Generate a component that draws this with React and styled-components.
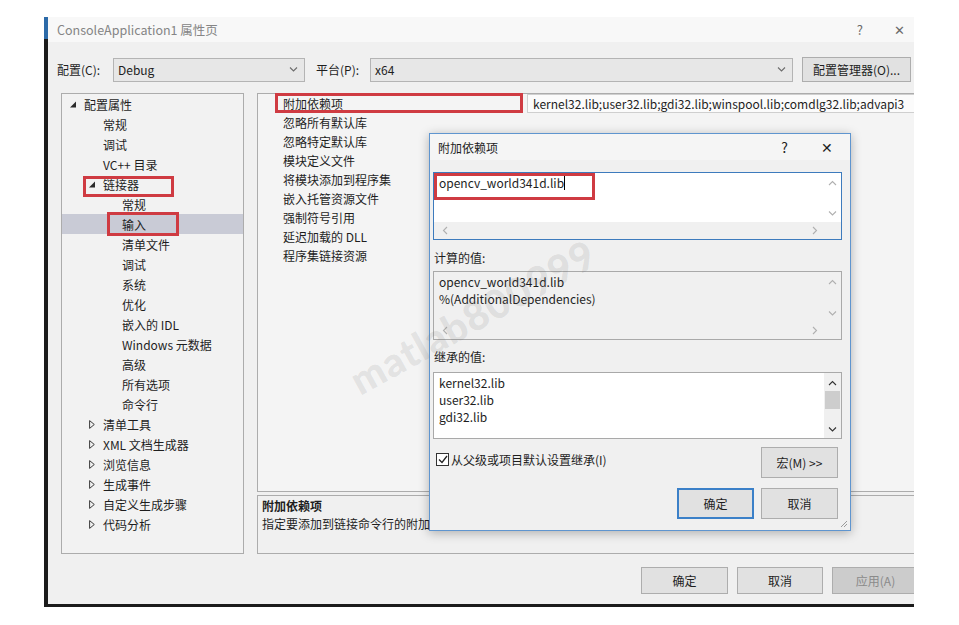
import React from 'react';
import styled, { createGlobalStyle } from 'styled-components';

const GlobalStyle = createGlobalStyle`
  html, body {
    margin: 0;
    padding: 0;
    background: #ffffff;
  }
  body {
    font-family: "Noto Sans CJK SC", "Noto Sans", sans-serif;
    font-size: 12px;
    color: #1e1e1e;
  }
`;

const RED = '#cf3b42';

const Page = styled.div`
  width: 959px;
  height: 625px;
  padding: 17px 0 0 44px;
  box-sizing: border-box;
`;

const Frame = styled.div`
  width: 870px;
  padding: 0 0 3px 4px;
  box-sizing: border-box;
  background: linear-gradient(#2c6aa8 0, #2c6aa8 22px, #1b1b1b 22px);
`;

const Window = styled.div`
  position: relative;
  width: 866px;
  height: 587px;
  background: #f0f0f0;
  overflow: hidden;
  display: flex;
  flex-direction: column;
`;

const TitleBar = styled.div`
  height: 25px;
  flex-shrink: 0;
  display: flex;
  align-items: center;
  padding: 0 0 0 9px;
  background: #f8f8f8;
  color: #858585;
  font-size: 12.5px;
`;

const TitleText = styled.span`
  flex: 1;
`;

const TitleControls = styled.div`
  display: flex;
  align-items: center;
  gap: ${p => p.$gap || 31}px;
  padding-right: ${p => p.$pr || 9}px;
  color: ${p => p.$color || '#6a6a6a'};
  font-size: ${p => p.$size || 13}px;
`;

const Body = styled.div`
  flex: 1;
  display: flex;
  flex-direction: column;
  padding: 15px 0 0 9px;
`;

const ConfigRow = styled.div`
  display: flex;
  align-items: center;
  height: 25px;
`;

const FieldLabel = styled.span`
  width: ${p => p.$w}px;
  margin-left: ${p => p.$ml || 0}px;
  flex-shrink: 0;
`;

const Combo = styled.div`
  width: ${p => p.$w}px;
  height: 24px;
  box-sizing: border-box;
  border: 1px solid #b4b4b4;
  background: #e7e7e7;
  display: flex;
  align-items: center;
  justify-content: space-between;
  padding: 0 6px 0 4px;
`;

const Button = styled.div`
  width: ${p => p.$w}px;
  height: ${p => p.$h || 27}px;
  box-sizing: border-box;
  border: ${p => (p.$default ? '2px solid #3b80c8' : '1px solid #adadad')};
  background: ${p => (p.$disabled ? '#cccccc' : '#e1e1e1')};
  color: ${p => (p.$disabled ? '#8a8a8a' : '#1e1e1e')};
  display: flex;
  align-items: center;
  justify-content: center;
  margin-left: ${p => p.$ml || 0}px;
  flex-shrink: 0;
`;

const Main = styled.div`
  display: flex;
  gap: 13px;
  margin-top: 11px;
  padding-left: 4px;
`;

const TreePanel = styled.div`
  width: 183px;
  height: 461px;
  box-sizing: border-box;
  border: 1px solid #acacac;
  background: #f2f2f2;
  flex-shrink: 0;
`;

const TreeRow = styled.div`
  position: relative;
  height: 20px;
  display: flex;
  align-items: center;
  padding-left: ${p => 8 + p.$level * 19}px;
  background: ${p => (p.$selected ? '#c9cbd6' : 'transparent')};
  white-space: nowrap;
`;

const ArrowSlot = styled.span`
  width: 14px;
  display: flex;
  align-items: center;
  flex-shrink: 0;
`;

const RedBox = styled.div`
  position: absolute;
  left: ${p => p.$l}px;
  top: ${p => p.$t}px;
  width: ${p => p.$w}px;
  height: ${p => p.$h}px;
  border: 3px solid ${RED};
  box-sizing: border-box;
  pointer-events: none;
`;

const RightCol = styled.div`
  width: 720px;
  display: flex;
  flex-direction: column;
  gap: 3px;
  flex-shrink: 0;
`;

const PropGrid = styled.div`
  height: 399px;
  box-sizing: border-box;
  border: 1px solid #acacac;
  background: #f4f4f4;
`;

const PropRow = styled.div`
  position: relative;
  height: 19px;
  display: grid;
  grid-template-columns: 17px 252px 1fr;
  align-items: stretch;
`;

const PropName = styled.div`
  grid-column: 2;
  display: flex;
  align-items: center;
  padding-left: 8px;
`;

const PropValue = styled.div`
  display: flex;
  align-items: center;
  padding-left: 5px;
  white-space: nowrap;
  overflow: hidden;
  ${p => p.$boxed && 'background: #fbfbfb; border: 1px solid #cfcfcf; border-right: none;'}
`;

const Description = styled.div`
  height: 59px;
  box-sizing: border-box;
  border: 1px solid #acacac;
  padding: 1px 4px;
  line-height: 18px;
`;

const DescTitle = styled.div`
  font-weight: bold;
`;

const Footer = styled.div`
  display: flex;
  gap: 9px;
  margin-top: 13px;
  padding-left: 584px;
`;

const Watermark = styled.div`
  position: absolute;
  left: 305px;
  top: 342px;
  transform: rotate(-29deg);
  transform-origin: 0 50%;
  font-family: "Lato", "Noto Sans", sans-serif;
  font-weight: 900;
  font-size: 40px;
  letter-spacing: 1px;
  color: rgba(110, 110, 110, 0.15);
  pointer-events: none;
  z-index: 3;
`;

const Modal = styled.div`
  position: absolute;
  left: 381px;
  top: 116px;
  width: 422px;
  height: 398px;
  box-sizing: border-box;
  border: 1px solid #5f95cf;
  background: #f0f0f0;
  box-shadow: 0 2px 10px rgba(0, 0, 0, 0.28);
  display: flex;
  flex-direction: column;
  z-index: 2;
`;

const ModalTitle = styled.div`
  height: 26px;
  display: flex;
  align-items: center;
  padding-left: 8px;
  background: #f5f5f5;
`;

const ModalBody = styled.div`
  position: relative;
  padding: 12px 8px 0 3px;
  display: flex;
  flex-direction: column;
`;

const TextBox = styled.div`
  position: relative;
  height: ${p => p.$h}px;
  box-sizing: border-box;
  border: 1px solid ${p => (p.$focus ? '#3d7bbd' : '#a9a9a9')};
  background: ${p => (p.$disabled ? '#f0f0f0' : '#ffffff')};
  display: grid;
  grid-template-columns: 1fr 17px;
  grid-template-rows: ${p => (p.$hscroll ? '1fr 17px' : '1fr')};
`;

const TextArea = styled.div`
  padding: 1px 5px;
  line-height: 17px;
  white-space: pre;
`;

const VScroll = styled.div`
  display: flex;
  flex-direction: column;
  align-items: center;
  justify-content: space-between;
  padding: 6px 0 4px;
  background: ${p => (p.$solid ? '#f0f0f0' : 'transparent')};
`;

const Thumb = styled.div`
  width: 15px;
  height: 18px;
  margin-top: 3px;
  background: #cdcdcd;
`;

const Spacer = styled.span`
  flex: 1;
`;

const HScroll = styled.div`
  grid-column: 1 / span 2;
  background: #f0f0f0;
  display: flex;
  align-items: center;
  justify-content: space-between;
  padding: 0 22px 0 7px;
`;

const Caret = styled.span`
  display: inline-block;
  width: 1px;
  height: 14px;
  background: #000;
  vertical-align: -2px;
`;

const SectionLabel = styled.div`
  height: 18px;
  line-height: 18px;
  margin: ${p => p.$mt}px 0 ${p => p.$mb}px 1px;
`;

const OptionRow = styled.div`
  display: flex;
  justify-content: space-between;
  align-items: flex-start;
  margin-top: 8px;
  padding: 0 4px 0 3px;
`;

const CheckLabel = styled.label`
  display: flex;
  align-items: center;
  gap: 2px;
  margin-top: 4px;
`;

const CheckBox = styled.span`
  width: 13px;
  height: 13px;
  box-sizing: border-box;
  border: 1px solid #333;
  background: #fff;
  display: flex;
  align-items: center;
  justify-content: center;
`;

const ModalButtons = styled.div`
  display: flex;
  justify-content: flex-end;
  gap: 7px;
  margin-top: 10px;
  padding-right: 4px;
`;

const Grip = styled.svg`
  position: absolute;
  right: 2px;
  bottom: 2px;
`;

const Chevron = ({ dir = 'down', color = '#6d6d6d', size = 9 }) => {
  const d = {
    down: 'M1 2.5l3.5 3.5 3.5-3.5',
    up: 'M1 6l3.5-3.5L8 6',
    left: 'M6 1L2.5 4.5 6 8',
    right: 'M3 1l3.5 3.5L3 8',
  }[dir];
  return (
    <svg width={size} height={size} viewBox="0 0 9 9">
      <path d={d} fill="none" stroke={color} strokeWidth="1.1" />
    </svg>
  );
};

const TreeArrow = ({ open }) =>
  open ? (
    <svg width="7" height="7" viewBox="0 0 7 7">
      <polygon points="6,0.5 6,6.5 0,6.5" fill="#2a2a2a" />
    </svg>
  ) : (
    <svg width="6" height="9" viewBox="0 0 6 9">
      <polygon points="0.6,0.6 5.3,4.5 0.6,8.4" fill="none" stroke="#3a3a3a" strokeWidth="1" />
    </svg>
  );

const tree = [
  { level: 0, arrow: 'open', text: '配置属性' },
  { level: 1, text: '常规' },
  { level: 1, text: '调试' },
  { level: 1, text: 'VC++ 目录' },
  { level: 1, arrow: 'open', text: '链接器', mark: { l: -6, t: 2, w: 91, h: 21 } },
  { level: 2, text: '常规' },
  { level: 2, text: '输入', selected: true, mark: { l: -15, t: -2, w: 72, h: 24 } },
  { level: 2, text: '清单文件' },
  { level: 2, text: '调试' },
  { level: 2, text: '系统' },
  { level: 2, text: '优化' },
  { level: 2, text: '嵌入的 IDL' },
  { level: 2, text: 'Windows 元数据' },
  { level: 2, text: '高级' },
  { level: 2, text: '所有选项' },
  { level: 2, text: '命令行' },
  { level: 1, arrow: 'closed', text: '清单工具' },
  { level: 1, arrow: 'closed', text: 'XML 文档生成器' },
  { level: 1, arrow: 'closed', text: '浏览信息' },
  { level: 1, arrow: 'closed', text: '生成事件' },
  { level: 1, arrow: 'closed', text: '自定义生成步骤' },
  { level: 1, arrow: 'closed', text: '代码分析' },
];

const props = [
  '附加依赖项',
  '忽略所有默认库',
  '忽略特定默认库',
  '模块定义文件',
  '将模块添加到程序集',
  '嵌入托管资源文件',
  '强制符号引用',
  '延迟加载的 DLL',
  '程序集链接资源',
];

const App = () => {
  return (
    <Page>
      <GlobalStyle />
      <Frame>
        <Window>
          <TitleBar>
            <TitleText>ConsoleApplication1 属性页</TitleText>
            <TitleControls>
              <span>?</span>
              <span>✕</span>
            </TitleControls>
          </TitleBar>
          <Body>
            <ConfigRow>
              <FieldLabel $w={56}>配置(C):</FieldLabel>
              <Combo $w={192}>
                <span>Debug</span>
                <Chevron />
              </Combo>
              <FieldLabel $w={54} $ml={11}>平台(P):</FieldLabel>
              <Combo $w={423}>
                <span>x64</span>
                <Chevron />
              </Combo>
              <Button $w={109} $h={25} $ml={9}>配置管理器(O)...</Button>
            </ConfigRow>

            <Main>
              <TreePanel>
                {tree.map((item, i) => (
                  <TreeRow key={i} $level={item.level} $selected={item.selected}>
                    <ArrowSlot>
                      {item.arrow && <TreeArrow open={item.arrow === 'open'} />}
                    </ArrowSlot>
                    <span>{item.text}</span>
                    {item.mark && (
                      <RedBox
                        $l={8 + item.level * 19 + (item.arrow ? 0 : 14) + item.mark.l}
                        $t={item.mark.t}
                        $w={item.mark.w}
                        $h={item.mark.h}
                      />
                    )}
                  </TreeRow>
                ))}
              </TreePanel>

              <RightCol>
                <PropGrid>
                  {props.map((name, i) => (
                    <PropRow key={name}>
                      <PropName>{name}</PropName>
                      <PropValue $boxed={i === 0}>
                        {i === 0 &&
                          'kernel32.lib;user32.lib;gdi32.lib;winspool.lib;comdlg32.lib;advapi3'}
                      </PropValue>
                      {i === 0 && <RedBox $l={17} $t={-1} $w={248} $h={20} />}
                    </PropRow>
                  ))}
                </PropGrid>
                <Description>
                  <DescTitle>附加依赖项</DescTitle>
                  <div>指定要添加到链接命令行的附加依赖项。</div>
                </Description>
              </RightCol>
            </Main>

            <Footer>
              <Button $w={87}>确定</Button>
              <Button $w={86}>取消</Button>
              <Button $w={87} $disabled>应用(A)</Button>
            </Footer>
          </Body>

          <Watermark>matlab800999</Watermark>

          <Modal>
            <ModalTitle>
              <TitleText>附加依赖项</TitleText>
              <TitleControls $gap={33} $pr={17} $color="#1e1e1e" $size={14}>
                <span>?</span>
                <span>✕</span>
              </TitleControls>
            </ModalTitle>
            <ModalBody>
              <TextBox $h={68} $focus $hscroll>
                <TextArea>
                  opencv_world341d.lib
                  <Caret />
                </TextArea>
                <VScroll>
                  <Chevron dir="up" color="#b0b0b0" />
                  <Chevron dir="down" color="#b0b0b0" />
                </VScroll>
                <HScroll>
                  <Chevron dir="left" color="#b0b0b0" />
                  <Chevron dir="right" color="#b0b0b0" />
                </HScroll>
                <RedBox $l={0} $t={0} $w={161} $h={27} />
              </TextBox>

              <SectionLabel $mt={9} $mb={4}>计算的值:</SectionLabel>
              <TextBox $h={69} $disabled $hscroll>
                <TextArea>{'opencv_world341d.lib\n%(AdditionalDependencies)'}</TextArea>
                <VScroll>
                  <Chevron dir="up" color="#b0b0b0" />
                  <Chevron dir="down" color="#b0b0b0" />
                </VScroll>
                <HScroll>
                  <Chevron dir="left" color="#b0b0b0" />
                  <Chevron dir="right" color="#b0b0b0" />
                </HScroll>
              </TextBox>

              <SectionLabel $mt={8} $mb={6}>继承的值:</SectionLabel>
              <TextBox $h={67}>
                <TextArea>{'kernel32.lib\nuser32.lib\ngdi32.lib'}</TextArea>
                <VScroll $solid>
                  <Chevron dir="up" color="#333" />
                  <Thumb />
                  <Spacer />
                  <Chevron dir="down" color="#333" />
                </VScroll>
              </TextBox>

              <OptionRow>
                <CheckLabel>
                  <CheckBox>
                    <svg width="10" height="9" viewBox="0 0 10 9">
                      <path d="M1 4.5l3 3L9 1" fill="none" stroke="#222" strokeWidth="1.3" />
                    </svg>
                  </CheckBox>
                  <span>从父级或项目默认设置继承(I)</span>
                </CheckLabel>
                <Button $w={77} $h={31}>宏(M) &gt;&gt;</Button>
              </OptionRow>

              <ModalButtons>
                <Button $w={77} $h={31} $default>确定</Button>
                <Button $w={77} $h={31}>取消</Button>
              </ModalButtons>
            </ModalBody>
            <Grip width="10" height="10" viewBox="0 0 10 10">
              <path d="M9 3L3 9M9 6L6 9" stroke="#9a9a9a" strokeWidth="1" />
            </Grip>
          </Modal>
        </Window>
      </Frame>
    </Page>
  );
};

export default App;
